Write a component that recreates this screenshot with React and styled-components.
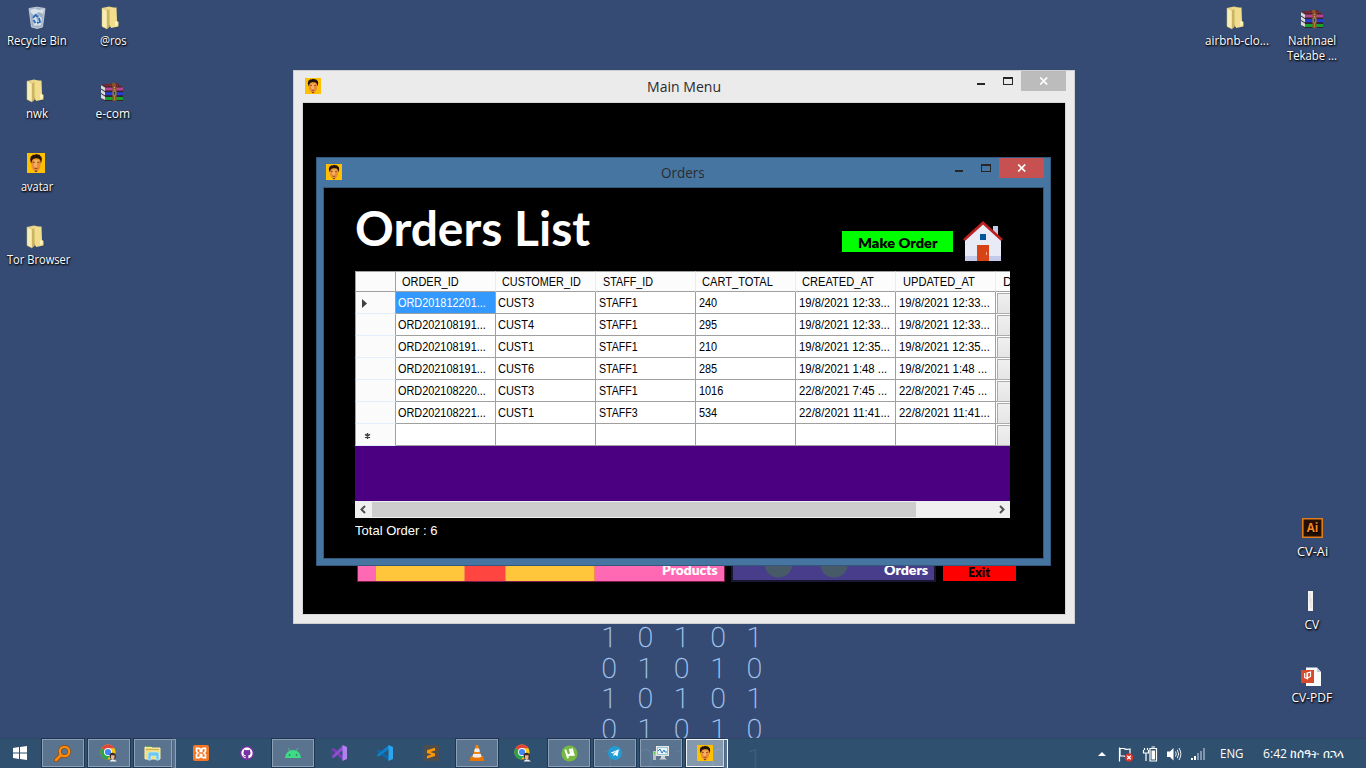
import React, { useLayoutEffect, useRef, useState } from "react";
import styled, { createGlobalStyle, css } from "styled-components";

const Global = createGlobalStyle`
  * { box-sizing: border-box; }
  body { margin: 0; overflow: hidden; background: #364b73; font-family: "Open Sans", "Noto Sans", sans-serif; }
  svg { display: block; }
`;

const ui = `"Open Sans", "Noto Sans", sans-serif`;
const grid = `"Liberation Sans", Arial, sans-serif`;
const gothic = `Lato, "Open Sans", sans-serif`;

/* ---------- text squeezed or widened to a fixed measure ---------- */
const FitBox = styled.span`
  display: inline-block;
  flex: none;
  width: ${(p) => p.$w}px;
  white-space: pre;
`;
const FitInner = styled.span`
  display: inline-block;
  transform-origin: 0 50%;
`;
function Fit({ w, children }) {
  const ref = useRef(null);
  const [k, setK] = useState(1);
  useLayoutEffect(() => {
    if (ref.current && ref.current.offsetWidth) {
      setK(w / ref.current.offsetWidth);
    }
  }, [w]);
  return (
    <FitBox $w={w}>
      <FitInner ref={ref} style={{ transform: `scaleX(${k})` }}>{children}</FitInner>
    </FitBox>
  );
}

/* ---------- desktop ---------- */
const Desktop = styled.main`
  position: relative;
  width: 1366px;
  height: 768px;
  overflow: hidden;
  background: #364b73;
`;
const Shortcut = styled.div`
  position: absolute;
  left: ${(p) => p.$x}px;
  top: ${(p) => p.$y}px;
  width: 76px;
  display: flex;
  flex-direction: column;
  align-items: center;
  color: #fff;
  font: 12px/15px ${ui};
  text-shadow: 1px 1px 2px #000, 0 1px 2px rgba(0, 0, 0, 0.8);
`;
const Glyph = styled.div`
  height: 27px;
  margin-right: ${(p) => p.$shift || 0}px;
`;

/* ---------- wallpaper ---------- */
const Binary = styled.div`
  position: absolute;
  left: 591px;
  top: 622px;
  display: grid;
  grid-template-columns: repeat(5, 36.3px);
  grid-auto-rows: 30.6px;
  font: 100 28px/31px Roboto, sans-serif;
  color: #a9cbf5;
  -webkit-text-stroke: 0.35px #a9cbf5;
  text-align: center;
`;
const bits = "1010101010101010101010101".split("");

/* ---------- windows ---------- */
const Window = styled.section`
  position: absolute;
  left: ${(p) => p.$x}px;
  top: ${(p) => p.$y}px;
  width: ${(p) => p.$w}px;
  height: ${(p) => p.$h}px;
  display: flex;
  flex-direction: column;
  background: ${(p) => p.$frame};
  border: 1px solid ${(p) => p.$edge};
  padding: 0 ${(p) => p.$pad}px ${(p) => p.$pad}px;
`;
const TitleBar = styled.header`
  flex: none;
  height: ${(p) => p.$h}px;
  display: flex;
  justify-content: space-between;
  align-items: flex-start;
`;
const TitleSide = styled.div`
  width: 120px;
  display: flex;
  justify-content: ${(p) => (p.$end ? "flex-end" : "flex-start")};
  padding: ${(p) => p.$p || "0"};
`;
const Title = styled.h1`
  margin: 0 1px 0 0;
  font: 400 15px/20px ${ui};
  color: #2b2b2b;
  padding-top: ${(p) => p.$t}px;
`;
const Client = styled.div`
  flex: 1;
  position: relative;
  background: #000;
  border: 1px solid ${(p) => p.$edge};
  overflow: hidden;
`;
const CloseButton = styled.button`
  width: 45px;
  height: 20px;
  padding: 0;
  border: 0;
  display: grid;
  place-items: center;
  background: ${(p) => p.$bg};
`;

/* ---------- main menu tiles ---------- */
const Tiles = styled.div`
  display: flex;
  align-items: flex-end;
  height: 479px;
  padding-left: 54px;
`;
const Tile = styled.div`
  position: relative;
  overflow: hidden;
  height: 40px;
  width: ${(p) => p.$w}px;
  margin-right: ${(p) => p.$gap || 0}px;
  margin-bottom: ${(p) => p.$mb || 0}px;
  border: ${(p) => p.$b};
  background: ${(p) => p.$bg};
  color: ${(p) => p.$c || "#fff"};
  font: 800 13.5px/16px ${gothic};
  display: flex;
  justify-content: ${(p) => (p.$center ? "center" : "flex-end")};
  align-items: flex-end;
  padding: ${(p) => p.$pad};
`;
const TileArt = styled.div`
  position: absolute;
  inset: 0 0 0 ${(p) => p.$l}px;
`;

/* ---------- orders page ---------- */
const Page = styled.div`
  padding: 10px 32px 0 31px;
  display: flex;
  flex-direction: column;
`;
const PageHead = styled.div`
  height: 73px;
  display: flex;
  align-items: flex-start;
`;
const Heading = styled.h2`
  margin: 0;
  flex: 1;
  color: #fff;
  font: 700 48px/58px ${gothic};
  padding-top: 1px;
`;
const MakeOrder = styled.button`
  width: 111px;
  height: 21px;
  margin: 33px 10px 0 0;
  padding: 3px 5px 0 0;
  border: 0;
  background: #0f0;
  color: #000;
  font: 800 13.5px/18px ${gothic};
`;
const House = styled.svg`
  width: 41px;
  height: 40px;
  margin: 23px 7px 0 0;
`;
const Grid = styled.div`
  width: 655px;
  height: 247px;
  background: #4b0082;
  overflow: hidden;
  display: flex;
  flex-direction: column;
  font: 12.5px/21px ${grid};
  color: #000;
`;
const Row = styled.div`
  display: flex;
  flex: none;
  width: 741px;
  height: ${(p) => (p.$head ? 21 : 22)}px;
`;
const RowHead = styled.div`
  width: 41px;
  background: #fbfbfc;
  border-left: 1px solid #a0a0a0;
  border-right: 1px solid #a0a0a0;
  border-bottom: 1px solid #e4edfb;
  padding: 7px 0 0 6px;
  ${(p) => p.$top && css`border-top: 1px solid #a0a0a0; border-bottom-color: #a0a0a0;`}
`;
const ColHead = styled.div`
  width: 100px;
  background: #fcfcfd;
  border-top: 1px solid #a0a0a0;
  border-bottom: 1px solid #a0a0a0;
  border-right: 1px solid #e4edfb;
  padding-left: ${(p) => p.$l || 6}px;
  line-height: 20px;
`;
const Cell = styled.div`
  width: 100px;
  border-right: 1px solid #a0a0a0;
  border-bottom: 1px solid #a0a0a0;
  padding-left: ${(p) => (p.$tight ? 2 : 3)}px;
  line-height: 22px;
  background: ${(p) => (p.$on ? "#3399ff" : "#fff")};
  color: ${(p) => (p.$on ? "#fff" : "#000")};
`;
const ButtonCell = styled.div`
  width: 100px;
  border-bottom: 1px solid #a0a0a0;
  background: #fff;
  padding: 1px;
  &::after {
    content: "";
    display: block;
    height: 19px;
    border: 1px solid #acacac;
    background: linear-gradient(#f0f0f0, #e5e5e5);
  }
`;
const Scroll = styled.div`
  margin-top: auto;
  height: 17px;
  background: #f0f0f0;
  display: flex;
  align-items: center;
`;
const Arrow = styled.svg`
  width: 17px;
  height: 17px;
  fill: none;
  stroke: #505050;
  stroke-width: 2;
`;
const Thumb = styled.div`
  width: 544px;
  height: 15px;
  margin-right: auto;
  background: #cdcdcd;
`;
const Total = styled.p`
  margin: 0;
  padding-top: 3px;
  font: 13.5px/20px ${grid};
  color: #fff;
`;

/* ---------- taskbar ---------- */
const Taskbar = styled.footer`
  position: absolute;
  left: 0;
  right: 0;
  bottom: 0;
  height: 30px;
  display: flex;
  background: rgba(46, 81, 110, 0.87);
  border-top: 1px solid #2e4767;
`;
const Start = styled.div`
  width: 42px;
  padding: 7px 0 0 13px;
`;
const Task = styled.div`
  width: 42px;
  height: 28px;
  margin-right: 4px;
  display: grid;
  place-items: center;
  ${(p) => p.$open && css`
    background: rgba(150, 165, 185, 0.42);
    border: 1px solid #8d9fb5;
    outline: 1px solid rgba(20, 40, 65, 0.6);
  `}
  ${(p) => p.$active && css`
    background: rgba(185, 198, 212, 0.62);
    border-color: #f2f5f8;
  `}
  ${(p) => p.$stack && css`
    position: relative;
    width: 38px;
    margin-right: 8px;
    &::after {
      content: "";
      position: absolute;
      right: -5px;
      top: -1px;
      width: 4px;
      height: 28px;
      border: 1px solid ${p.$active ? "#f2f5f8" : "#8d9fb5"};
      background: rgba(150, 165, 185, 0.42);
      border-left: 0;
    }
  `}
`;
const Tray = styled.div`
  margin-left: auto;
  width: 270px;
  display: flex;
  align-items: flex-start;
  color: #fff;
  font: 12px/16px ${ui};
`;
const TrayText = styled.span`
  padding-top: 7px;
  margin-left: ${(p) => p.$l}px;
`;

/* ---------- drawings ---------- */
const Avatar = ({ w = 16, h = 16 }) => (
  <svg width={w} height={h} viewBox="0 0 16 16" preserveAspectRatio="none">
    <path fill="#ffc000" d="M0 0h16v16H0z" />
    <path fill="#e88d3b" d="M4 5h8v5.500l-1 2.500-2 2H7l-2-2-1-2.500z" />
    <path fill="#f8ae5d" d="M6 5.500H10.500v2H9v4H7l-1-2z" />
    <path fill="#24100d" d="M3.600 8.500 2.800 5l.7-2.500 1.200-.4.600-.9 1.500.3L8 .7l1.500.5 1.700.2.600.9 1.100.9.300 2-.8 3.300-.7-3L10.500 4.500 8 4.200l-2.500.5-.9 1z" />
    <path stroke="#6d351c" strokeWidth=".7" d="M5 7.400h2M9 7.400h2M6.700 12.300h2.600" />
    <path fill="#57301d" d="m6.900 14.300 1.100-.3 1.100.3-.7.900h-.8z" />
  </svg>
);
const Folder = () => (
  <svg width="20" height="24" viewBox="0 0 20 24">
    <path d="m15 23 4-3-3-5z" fill="#24344e" opacity=".45" />
    <path d="M1 2 8 .6 15 2v17l-6 2z" fill="#e9d586" />
    <path d="M7 2.500 15.500 1.500 16 15l1.500 1v4.500L10 22z" fill="#f2dd8d" />
    <path d="M1 2l5 2.500V23L1 20.500z" fill="#f8edb3" stroke="#d7bf6c" strokeWidth=".5" />
    <path d="M6 4.500 8.500 3v18L6 23z" fill="#cbb565" />
    <path d="M14 15.500h2.500v4H14z" fill="#fff4c2" />
  </svg>
);
const Bin = () => (
  <svg width="18" height="24" viewBox="0 0 18 24">
    <path d="M1 2.500 9 1.200l8 1.300L14.500 21 9 22.500 3.500 21z" fill="#9fb2c4" stroke="#d0dae4" strokeWidth=".8" />
    <path d="m2 4 5-1.500 4 1.500 5-1-1 5-4-2-5 3-3-2zM5 12l3-2 2 9-4 1zM11 10l3 2-1 7-3 1z" fill="#e7eef4" opacity=".8" />
    <path d="m5 12 2.500-3 2.500 2M11 12l1 4-3 1M7.500 17l-2-3" stroke="#2768c2" strokeWidth="1.800" fill="none" />
  </svg>
);
const Rar = () => (
  <svg width="24" height="19" viewBox="0 0 24 19">
    <path d="m1 2 16-2 6 5v13H5L1 15z" fill="#332331" />
    <path d="m1 2 4 2.500V8L1 5.500zM1 6.500 5 9v3.500L1 10zM1 11l4 2.500V17l-4-2z" fill="#d9d9d9" />
    <path d="m1 2 15-2 6.500 3.500H5z" fill="#7b2b30" />
    <path d="M5 4.500h18v3H5z" fill="#b34591" />
    <path d="M5 9.200h18v3H5z" fill="#2340d8" />
    <path d="M5 14h18v3H5z" fill="#16a32c" />
    <path d="M12 0h3l1.500 4v14h-4V4z" fill="#8b5529" />
    <path d="M13.200 8.200h2.600v4h-2.600z" fill="#3c3c30" stroke="#b9a878" strokeWidth=".7" />
    <path d="M14.500 4v3M14.500 13.500V17" stroke="#d9ad51" strokeDasharray="1 1" />
  </svg>
);
const Illustrator = () => (
  <svg width="21" height="20" viewBox="0 0 21 20">
    <path d="M.8.800h19.400v18.400H.8z" fill="#261003" stroke="#de7c1d" strokeWidth="1.600" />
    <text x="10.500" y="13.500" fontSize="11.500" fontWeight="700" fontFamily="Open Sans, sans-serif" textAnchor="middle" fill="#f18a20">Ai</text>
  </svg>
);
const Sheet = () => (
  <svg width="5" height="20" viewBox="0 0 5 20">
    <path d="M0 0h5v20H0z" fill="#f5f3f2" />
    <path d="M2 2v9M3 7v10" stroke="#d9d3cf" strokeWidth=".7" />
  </svg>
);
const Pdf = () => (
  <svg width="21" height="20" viewBox="0 0 21 20">
    <path d="M5 .5h11L20 5v14H5z" fill="#fafbfc" />
    <path d="m16 .5 4 4.500h-4z" fill="#c3ccd8" />
    <path d="M0 3h13v13H0z" fill="#d64b2c" />
    <path d="M3.700 6v4.500l2.300.8V5.500M6.500 12.500V6L9.500 5v4.500L6.500 11" stroke="#fff" strokeWidth="1.200" fill="none" />
  </svg>
);
const Controls = ({ bg }) => (
  <>
    <svg width="44" height="20" viewBox="0 0 44 20" shapeRendering="crispEdges">
      <path d="M0 12h8v2H0zM26 6h10v8H26zM27 8v5h8V8z" fill="#262626" fillRule="evenodd" />
    </svg>
    <CloseButton $bg={bg}>
      <svg width="10" height="8" viewBox="0 0 10 8">
        <path d="m1.200.5 7 7M8.200.5l-7 7" stroke="#fff" strokeWidth="1.700" />
      </svg>
    </CloseButton>
  </>
);
const ChromeLogo = () => (
  <svg width="18" height="18" viewBox="0 0 18 18">
    <circle cx="8" cy="8" r="7.600" fill="#f5c518" />
    <path d="M8 8 1.420 4.200A7.600 7.600 0 0 1 14.580 4.200H8z" fill="#e2443a" />
    <path d="M8 8 1.420 4.200a7.600 7.600 0 0 0 6 11.400l3.400-5.600z" fill="#2ba24c" />
    <circle cx="8" cy="8" r="4" fill="#fff" />
    <circle cx="8" cy="8" r="3.100" fill="#4285f4" />
    <path d="M9.700 10q2.500-2.500 5.800 0l.3 3.500-1.500 2.500h-3L9.700 13z" fill="#3a2926" />
    <path d="M11 11.300h3.500V14L12.800 16 11 14.500z" fill="#e9b699" />
    <path d="m9.500 17.500 2-2h3l2.500 2z" fill="#eee" />
  </svg>
);
const Search = () => (
  <svg width="18" height="17" viewBox="0 0 18 17" fill="none">
    <path d="m7 10-5 5" stroke="#8d4507" strokeWidth="4" strokeLinecap="round" />
    <circle cx="10.500" cy="6.500" r="4.700" stroke="#8d4507" strokeWidth="3.400" />
    <circle cx="10.500" cy="6.500" r="4.700" stroke="#ff8b0d" strokeWidth="2.300" />
    <path d="m7 10-5 5" stroke="#ff8b0d" strokeWidth="2.600" strokeLinecap="round" />
  </svg>
);
const Explorer = () => (
  <svg width="18" height="16" viewBox="0 0 18 16">
    <path d="M1 2h6l1 1h8v11H1z" fill="#f2dc7c" stroke="#fff0a5" />
    <path d="M2 1h5v1H2z" fill="#55a957" />
    <path d="M2 4h13v1H2z" fill="#c8ae55" />
    <path d="M4 15V9q0-2 2-2h7q2 0 2 2v6h-3v-4H7v4z" fill="#6dc8ec" stroke="#c7f1ff" strokeWidth=".7" />
  </svg>
);
const Xampp = () => (
  <svg width="16" height="16" viewBox="0 0 16 16">
    <rect width="16" height="16" rx="2" fill="#f37623" />
    <path d="M3.500 3.300h2.300q1.500 0 1.500 1.500v1.700h1.400V4.800q0-1.500 1.500-1.500h2.300v3.200L11 8l1.500 1.500v3.200h-2.300q-1.500 0-1.500-1.500V9.500H7.300v1.700q0 1.500-1.500 1.500H3.500V9.500L5 8 3.500 6.500z" fill="none" stroke="#fff" strokeWidth="1.700" />
  </svg>
);
const Github = () => (
  <svg width="14" height="14" viewBox="0 0 16 16">
    <circle cx="8" cy="8" r="8" fill="#7932a5" />
    <path fill="#fff" transform="translate(1.600 1.600) scale(.8)" d="M8 0C3.580 0 0 3.580 0 8c0 3.540 2.290 6.530 5.470 7.590.4.070.55-.17.55-.38 0-.19-.01-.82-.01-1.490-2.010.37-2.530-.49-2.690-.94-.09-.23-.48-.94-.82-1.130-.28-.15-.68-.52-.01-.53.63-.01 1.080.58 1.230.82.72 1.210 1.870.87 2.330.66.07-.52.28-.87.51-1.070-1.780-.2-3.640-.89-3.640-3.950 0-.87.31-1.590.82-2.150-.08-.2-.36-1.020.08-2.120 0 0 .67-.21 2.200.82a7.500 7.500 0 0 1 4 0c1.530-1.040 2.200-.82 2.200-.82.44 1.100.16 1.920.08 2.120.51.56.82 1.270.82 2.150 0 3.070-1.870 3.750-3.650 3.950.29.25.54.73.54 1.480 0 1.070-.01 1.930-.01 2.200 0 .21.15.46.55.38A8 8 0 0 0 16 8c0-4.420-3.580-8-8-8z" />
  </svg>
);
const Android = () => (
  <svg width="16" height="10" viewBox="0 0 16 10">
    <path d="M0 10C.3 6.500 2 4 4.500 2.800L3 .4l.5-.3L5 2.500a8 8 0 0 1 6 0L12.500.1l.5.3-1.500 2.400C14 4 15.700 6.500 16 10z" fill="#3ddc84" />
    <circle cx="4.500" cy="7" r=".8" fill="#364f60" /><circle cx="11.500" cy="7" r=".8" fill="#364f60" />
  </svg>
);
const VisualStudio = () => (
  <svg width="16" height="16" viewBox="0 0 16 16">
    <path d="M0 3.800 1.500 3v10L0 12.200z" fill="#6a32a5" />
    <path d="M1.500 3 3 3.300 12 11v4.800L1.200 5z" fill="#7a3dbb" />
    <path d="M1.500 13 3 12.700 12 5V.2L1.200 11z" fill="#8e4fd0" />
    <path d="M11.500 0 16 2v12l-4.500 2z" fill="#b180ef" />
  </svg>
);
const VsCode = () => (
  <svg width="16" height="16" viewBox="0 0 16 16">
    <path d="M0 5.500 1.500 4.200 12 11.800V16L.2 6.600z" fill="#0a68a8" />
    <path d="M0 10.500 1.500 11.800 12 4.200V0L.2 9.400z" fill="#0f7fc9" />
    <path d="M11.500 0 16 2v12l-4.500 2z" fill="#2aa5ee" />
  </svg>
);
const Sublime = () => (
  <svg width="16" height="16" viewBox="0 0 16 16">
    <rect width="16" height="16" rx="1" fill="#4d4d4d" />
    <path d="M4 5.300 12 2.800v2.700L7.300 7 12 8.500v2.600L4 13.600v-2.700l4.500-1.400L4 8z" fill="#ff9800" />
  </svg>
);
const Vlc = () => (
  <svg width="16" height="17" viewBox="0 0 16 17">
    <path d="M2 11h12l1.500 5H.5z" fill="#e87504" />
    <path d="M7 0h2l3.500 12q-4.500 2.500-9 0z" fill="#f58512" />
    <path d="M6 3.500h4l1 3q-3 1-6 0zM4.200 9h7.600l.8 2.700q-4.600 1.800-9.200 0z" fill="#eee" />
  </svg>
);
const Utorrent = () => (
  <svg width="17" height="17" viewBox="0 0 17 17">
    <circle cx="8.500" cy="8.500" r="8" fill="#75b943" />
    <path d="m4.300 4.500 2.700 8.800M5.400 8q1 2.800 3.300 2 1.500-.7 1-2.700L8.800 3.800M9.700 7.500q.6 2.700 2.600 2.400h1.400M12.300 9.500 10.900 3.500" fill="none" stroke="#fff" strokeWidth="1.900" />
  </svg>
);
const Telegram = () => (
  <svg width="14" height="14" viewBox="0 0 16 16">
    <circle cx="8" cy="8" r="8" fill="#239bd4" />
    <path d="m3 7.700 9.500-4L10.800 12 8 10l-1.600 1.600-.2-2.500L10.500 5 5.400 8.500z" fill="#fff" />
  </svg>
);
const Monitor = () => (
  <svg width="17" height="16" viewBox="0 0 17 16">
    <path d="M0 6h3v9H0z" fill="#b8c0c4" /><path d="M1 7h1v2H1z" fill="#56c73f" />
    <path d="M3 1h13v10H3z" fill="#e8e8e6" />
    <path d="M4.500 2.500h10v7h-10z" fill="#eaf8fd" stroke="#59a4c6" strokeWidth=".6" />
    <path d="m5 6 2-2 2 4 2-3 1 2h2" fill="none" stroke="#2479bb" />
    <path d="M8 11h4v2l2 1.500H6L8 13z" fill="#cfd2d2" />
  </svg>
);
const TrayIcons = () => (
  <svg width="115" height="29" viewBox="1096 739 115 29">
    <path d="m1098 756 4-4 4 4z" fill="#fff" />
    <path d="M1119.500 747.500v14" stroke="#fff" strokeWidth="1.200" />
    <path d="M1120 748.500h4q1.500 1.500 6 .5v7q-3.500 1.500-6 0h-4z" fill="none" stroke="#fff" strokeWidth="1.200" />
    <circle cx="1129" cy="757.500" r="4.300" fill="#d5332c" />
    <path d="m1127.200 755.700 3.600 3.600m0-3.600-3.600 3.600" stroke="#fff" strokeWidth="1.300" />
    <path d="M1143.500 750v3h5v-3m-4-2v2m3-2v2m-1.500 3v8" fill="none" stroke="#fff" strokeWidth="1.200" />
    <path d="M1150 748.500h6.500V761H1150zM1151.500 747h3.500" fill="none" stroke="#fff" strokeWidth="1.200" />
    <path d="M1151.500 750.500h3.500v9h-3.500z" fill="#fff" />
    <path d="M1167 751.500h3l3.500-3.500v12.500l-3.500-3.500h-3z" fill="#fff" />
    <path d="M1175.500 751.500q1.500 2.500 0 5M1177.300 749.800q2.600 4.200 0 8.400M1179 748q3.700 6 0 12" fill="none" stroke="#fff" strokeWidth=".9" />
    <path d="M1191 758h2v2h-2zM1194 756h2v4h-2z" fill="#fff" />
    <path d="M1197 753h2v7h-2zM1200 751h2v9h-2zM1203 748h2v12h-2z" fill="#8195ac" />
  </svg>
);

/* ---------- data ---------- */
const columns = [
  ["ORDER_ID", 57, 6], ["CUSTOMER_ID", 79, 6], ["STAFF_ID", 50, 7], ["CART_TOTAL", 71, 6], ["CREATED_AT", 72, 6], ["UPDATED_AT", 72, 7],
];
const orders = [
  ["ORD201812201...", "CUST3", "STAFF1", "240", "19/8/2021 12:33...", "19/8/2021 12:33..."],
  ["ORD202108191...", "CUST4", "STAFF1", "295", "19/8/2021 12:33...", "19/8/2021 12:33..."],
  ["ORD202108191...", "CUST1", "STAFF1", "210", "19/8/2021 12:35...", "19/8/2021 12:35..."],
  ["ORD202108191...", "CUST6", "STAFF1", "285", "19/8/2021 1:48 ...", "19/8/2021 1:48 ..."],
  ["ORD202108220...", "CUST3", "STAFF1", "1016", "22/8/2021 7:45 ...", "22/8/2021 7:45 ..."],
  ["ORD202108221...", "CUST1", "STAFF3", "534", "22/8/2021 11:41...", "22/8/2021 11:41..."],
];
const cellWidth = (text, col) => {
  if (col === 0) return 88;
  if (col === 1) return 36;
  if (col === 2) return 39;
  if (col === 3) return text.length * 6.100;
  return text.endsWith(" ...") ? 88 : 91;
};
const shortcuts = [
  { x: -1, y: 6, icon: <Bin />, lines: [["Recycle Bin", 60]] },
  { x: 75, y: 6, icon: <Folder />, lines: [["@ros", 27]], shift: 5 },
  { x: -1, y: 79, icon: <Folder />, lines: [["nwk", 22]], shift: 2 },
  { x: 75, y: 79, icon: <Rar />, lines: [["e-com", 35]], pad: 4, shift: 2 },
  { x: -1, y: 152, icon: <Avatar w={18} h={20} />, lines: [["avatar", 32]], shift: 2, pad: 1 },
  { x: 0, y: 225, icon: <Folder />, lines: [["Tor Browser", 63]], shift: 5 },
  { x: 1199, y: 6, icon: <Folder />, lines: [["airbnb-clo...", 64]], shift: 2 },
  { x: 1274, y: 6, icon: <Rar />, lines: [["Nathnael", 48], ["Tekabe ...", 50]], pad: 4 },
  { x: 1274, y: 517, icon: <Illustrator />, lines: [["CV-Ai", 31]], pad: 1 },
  { x: 1274, y: 590, icon: <Sheet />, lines: [["CV", 15]], shift: 3, pad: 1 },
  { x: 1274, y: 663, icon: <Pdf />, lines: [["CV-PDF", 41]], shift: 2, pad: 4 },
];
const tasks = [
  { icon: <Search />, open: true },
  { icon: <ChromeLogo />, open: true },
  { icon: <Explorer />, open: true, stack: true },
  { icon: <Xampp /> },
  { icon: <Github /> },
  { icon: <Android />, open: true },
  { icon: <VisualStudio /> },
  { icon: <VsCode /> },
  { icon: <Sublime /> },
  { icon: <Vlc />, open: true },
  { icon: <ChromeLogo /> },
  { icon: <Utorrent />, open: true },
  { icon: <Telegram />, open: true },
  { icon: <Monitor />, open: true },
  { icon: <Avatar />, open: true, active: true, stack: true },
];

function MainMenu() {
  return (
    <Window $x={293} $y={70} $w={782} $h={554} $frame="#ebebeb" $edge="#cfcfcf" $pad={8}>
      <TitleBar $h={31}>
        <TitleSide $p="7px 0 0 3px"><Avatar /></TitleSide>
        <Title $t={5}><Fit w={74}>Main Menu</Fit></Title>
        <TitleSide $end><Controls bg="#bcbcbc" /></TitleSide>
      </TitleBar>
      <Client $edge="#d6d6d6">
        <Tiles>
          <Tile $w={368} $gap={6} $mb={0} $b="1px solid #7a1a48" $bg="#ff69b4" $pad="0 6px 3px 0">
            <TileArt $l={18}>
              <svg width="220" height="40">
                <path d="M0 0h219v40H0z" fill="#ffc63c" />
                <path d="M89 0h41v40H89z" fill="#ff453f" />
                <path d="M88.500 0v40M129.500 0v40M218.500 0v40" stroke="#f78a4a" />
              </svg>
            </TileArt>
            <Fit w={56}>Products</Fit>
          </Tile>
          <Tile $w={205} $gap={7} $b="2px solid #19162f" $bg="#483d8b" $pad="0 6px 2px 0">
            <TileArt $l={0}>
              <svg width="140" height="38">
                <circle cx="45.500" cy="19.500" r="14" fill="#465a68" /><circle cx="101" cy="19.500" r="14" fill="#465a68" />
              </svg>
            </TileArt>
            <Fit w={44}>Orders</Fit>
          </Tile>
          <Tile $w={73} $mb={1} $b="0" $bg="#f00" $c="#000" $center $pad="0 1px 1px 0"><Fit w={22}>Exit</Fit></Tile>
        </Tiles>
      </Client>
    </Window>
  );
}

function Orders() {
  return (
    <Window $x={316} $y={157} $w={735} $h={409} $frame="#4775a1" $edge="#35597d" $pad={6}>
      <TitleBar $h={29}>
        <TitleSide $p="6px 0 0 3px"><Avatar /></TitleSide>
        <Title $t={4}><Fit w={44}>Orders</Fit></Title>
        <TitleSide $end><Controls bg="#c75050" /></TitleSide>
      </TitleBar>
      <Client $edge="#35597d">
        <Page>
          <PageHead>
            <Heading><Fit w={235}>Orders List</Fit></Heading>
            <MakeOrder><Fit w={80}>Make Order</Fit></MakeOrder>
            <House viewBox="0 0 41 40">
              <path d="M30 5h5v12h-5z" fill="#c5c9ea" />
              <path d="M2 18 20 2l18 16v22H2z" fill="#e8eaf6" />
              <path d="M2 35h36v5H2z" fill="#c5c9ea" />
              <path d="M1 19 20 1.800 39 19" fill="none" stroke="#bb1f20" strokeWidth="2.700" />
              <path d="M17 13h6v6h-6z" fill="#01579b" />
              <path d="M14 24h12v16H14z" fill="#d84315" />
              <path d="M23 31h1v3h-1z" fill="#ffab91" />
            </House>
          </PageHead>
          <Grid>
            <Row $head>
              <RowHead $top />
              {columns.map(([t, w, l]) => <ColHead key={t} $l={l}><Fit w={w}>{t}</Fit></ColHead>)}
              <ColHead $l={7}>DELETE</ColHead>
            </Row>
            {orders.map((row, r) => (
              <Row key={r}>
                <RowHead>
                  {r === 0 && <svg width="5" height="9"><path d="M0 0l5 4.500L0 9z" fill="#404040" /></svg>}
                </RowHead>
                {row.map((t, c) => (
                  <Cell key={c} $tight={c < 2} $on={r === 0 && c === 0}><Fit w={cellWidth(t, c)}>{t}</Fit></Cell>
                ))}
                <ButtonCell />
              </Row>
            ))}
            <Row>
              <RowHead>
                <svg width="12" height="12"><path d="M5.500 2v6M3 3.300l5 3.400M8 3.300 3 6.700" stroke="#404040" strokeWidth="1.400" /></svg>
              </RowHead>
              {columns.map(([t]) => <Cell key={t} />)}
              <ButtonCell />
            </Row>
            <Scroll>
              <Arrow viewBox="0 0 17 17"><path d="M10 5 6.500 8.500 10 12" /></Arrow>
              <Thumb />
              <Arrow viewBox="0 0 17 17"><path d="M7 5l3.500 3.500L7 12" /></Arrow>
            </Scroll>
          </Grid>
          <Total><Fit w={83}>Total Order : 6</Fit></Total>
        </Page>
      </Client>
    </Window>
  );
}

export default function App() {
  return (
    <Desktop>
      <Global />
      <Binary>{bits.map((b, i) => <span key={i}>{b}</span>)}</Binary>
      {shortcuts.map((s) => (
        <Shortcut key={s.lines[0][0]} $x={s.x} $y={s.y}>
          <Glyph $shift={s.shift} style={{ paddingTop: s.pad || 0 }}>{s.icon}</Glyph>
          {s.lines.map(([t, w]) => <Fit key={t} w={w}>{t}</Fit>)}
        </Shortcut>
      ))}
      <MainMenu />
      <Orders />
      <Taskbar>
        <Start>
          <svg width="14" height="14" viewBox="0 0 14 14">
            <path d="M0 2 6 1v5.500H0zM7 .9 14 0v6.500H7zM0 7.500h6V13l-6-1zM7 7.500h7V14l-7-.9z" fill="#fff" />
          </svg>
        </Start>
        {tasks.map((t, i) => <Task key={i} $open={t.open} $active={t.active} $stack={t.stack}>{t.icon}</Task>)}
        <Tray>
          <TrayIcons />
          <TrayText $l={9}><Fit w={23}>ENG</Fit></TrayText>
          <TrayText $l={20}><Fit w={81}>6:42 ከሰዓት በኋላ</Fit></TrayText>
        </Tray>
      </Taskbar>
    </Desktop>
  );
}
